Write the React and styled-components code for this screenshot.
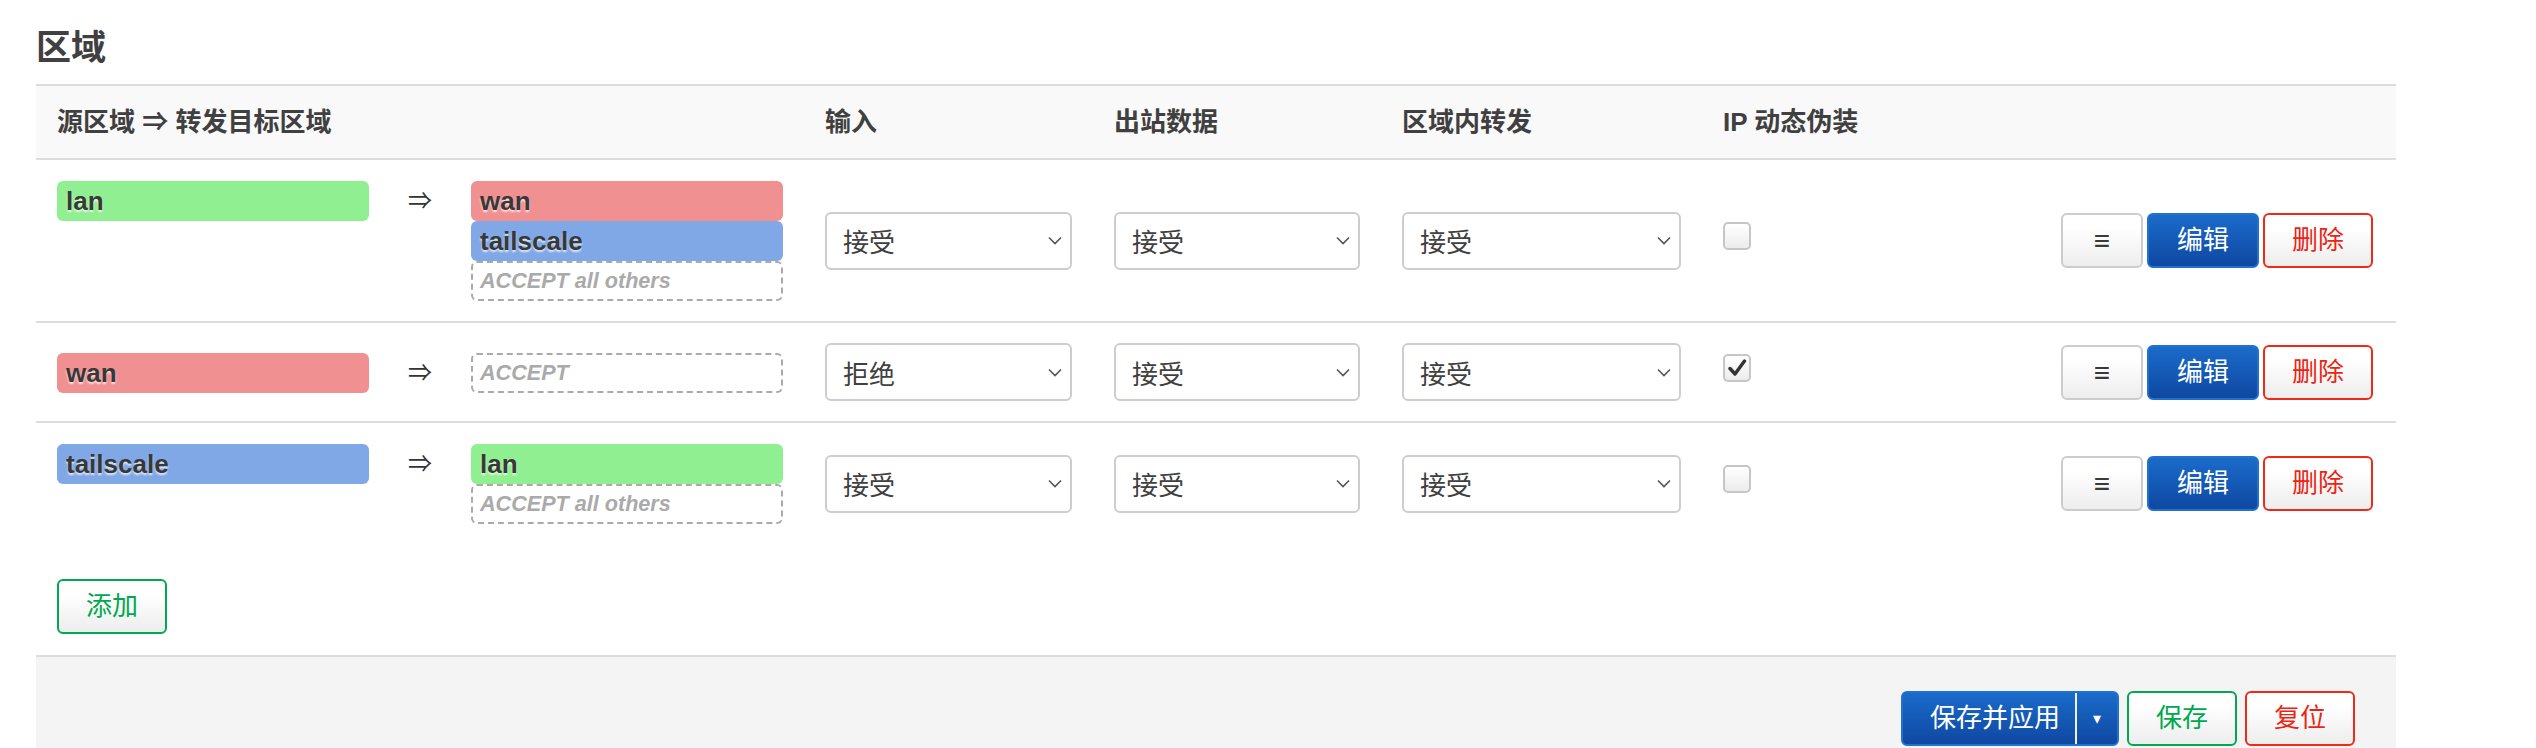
import React from 'react';
import styled, { createGlobalStyle } from 'styled-components';

const GlobalStyle = createGlobalStyle`
  body {
    margin: 0;
    background: #fff;
    color: #404040;
    font-family: "Liberation Sans", "Noto Sans CJK SC", sans-serif;
    font-size: 26px;
  }
`;

const Page = styled.div`
  width: 2360px;
  margin-left: 36px;
`;

const Title = styled.h2`
  margin: 28px 0 16px;
  font-size: 35px;
  line-height: 40px;
  font-weight: bold;
  color: #404040;
`;

/* shared column layout for header and rows */
const Grid = styled.div`
  display: grid;
  grid-template-columns: 768px 289px 288px 321px 1fr auto;
  align-items: center;
`;

const HeadRow = styled(Grid)`
  height: 72px;
  background: #f9f9f9;
  border-top: 2px solid #ddd;
  border-bottom: 2px solid #ddd;
`;

const HeadCell = styled.div`
  padding: 0 21px;
  font-weight: bold;
  line-height: 32px;
  white-space: nowrap;
`;

const Row = styled(Grid)`
  border-bottom: ${(p) => (p.$last ? 'none' : '2px solid #ddd')};
`;

const Cell = styled.div`
  padding: 20px ${(p) => (p.$right ? 23 : 21)}px 20px 21px;
  display: flex;
  align-items: center;
  justify-content: ${(p) => (p.$right ? 'flex-end' : 'flex-start')};
`;

const Forwards = styled.div`
  width: 100%;
  padding-top: 1px;
  display: grid;
  grid-template-columns: 312px 1fr 312px;
  align-items: start;
`;

const Arrow = styled.span`
  text-align: center;
  line-height: 40px;
  font-size: 24px;
  color: #333;
`;

const DestList = styled.div`
  display: flex;
  flex-direction: column;
`;

const Badge = styled.div`
  height: 40px;
  line-height: 40px;
  padding: 0 9px;
  border-radius: 6px;
  background: ${(p) => p.$color};
  font-weight: bold;
  font-size: 26px;
  color: #383838;
  text-shadow: 0 2px 2px rgba(255, 255, 255, 0.75);
  white-space: nowrap;
`;

const PolicyBadge = styled.div`
  box-sizing: border-box;
  height: 40px;
  line-height: 36px;
  padding: 0 7px;
  border: 2px dashed #aaa;
  border-radius: 6px;
  font-size: 21.6px;
  font-weight: bold;
  font-style: italic;
  color: #aaa;
  white-space: nowrap;
`;

const SelectBox = styled.div`
  box-sizing: border-box;
  width: 100%;
  height: 58px;
  padding: 0 8px 0 16px;
  border: 2px solid #cdcdcd;
  border-radius: 6px;
  background: #fff;
  display: flex;
  align-items: center;
  justify-content: space-between;
  color: #404040;
`;

const Check = styled.div`
  box-sizing: border-box;
  width: 28px;
  height: 28px;
  margin-bottom: 9px;
  border: 2px solid #c6c6c6;
  border-radius: 5px;
  background: linear-gradient(#fff, #ececec);
  display: flex;
  align-items: center;
  justify-content: center;
`;

const Actions = styled.div`
  display: flex;
  gap: 4px;
`;

const Button = styled.button`
  box-sizing: border-box;
  height: 55px;
  padding: 0 ${(p) => p.$pad || 28}px;
  border: 2px solid ${(p) => p.$border || '#ccc'};
  border-radius: 6px;
  background: linear-gradient(#fff, #fff 25%, #ededed);
  color: ${(p) => p.$color || '#404040'};
  font-family: inherit;
  font-size: 26px;
  line-height: 51px;
  white-space: nowrap;
  cursor: pointer;
`;

const MenuButton = styled(Button)`
  width: 82px;
  padding: 0;
  font-weight: bold;
  font-size: 28px;
  color: #3a3a3a;
`;

const BlueButton = styled(Button)`
  border-color: #2171d1;
  background: linear-gradient(#1b6bca, #0e48a2);
  color: #fff;
`;

const CreateBar = styled.div`
  padding: 35px 21px 21px;
`;

const Footer = styled.div`
  border-top: 2px solid #ddd;
  background: #f4f4f4;
  padding: 34px 41px 30px;
  display: flex;
  justify-content: flex-end;
  gap: 8px;
`;

const SplitButton = styled(BlueButton)`
  display: flex;
  align-items: stretch;
  padding: 0;
`;

const SplitMain = styled.span`
  padding: 0 15px 0 27px;
`;

const SplitCaret = styled.span`
  width: 40px;
  border-left: 2px solid rgba(255, 255, 255, 0.92);
  font-size: 16px;
  text-align: center;
`;

const Chevron = () => (
  <svg width="14" height="9" viewBox="0 0 14 9" fill="none">
    <path d="M1 1.5 L7 7.5 L13 1.5" stroke="#555" strokeWidth="1.6" />
  </svg>
);

const Tick = () => (
  <svg width="20" height="18" viewBox="0 0 20 18" fill="none">
    <path d="M3 9.5 L8 15 L17.5 2" stroke="#333" strokeWidth="3.4" strokeLinecap="round" strokeLinejoin="round" />
  </svg>
);

const ZONE_COLORS = {
  lan: '#90ef90',
  wan: '#f09090',
  tailscale: '#80a8e6',
};

const zones = [
  { name: 'lan', dest: ['wan', 'tailscale'], policy: 'ACCEPT all others', input: '接受', output: '接受', forward: '接受', masq: false },
  { name: 'wan', dest: [], policy: 'ACCEPT', input: '拒绝', output: '接受', forward: '接受', masq: true },
  { name: 'tailscale', dest: ['lan'], policy: 'ACCEPT all others', input: '接受', output: '接受', forward: '接受', masq: false },
];

const Select = ({ value }) => (
  <SelectBox>
    <span>{value}</span>
    <Chevron />
  </SelectBox>
);

export default function App() {
  return (
    <>
      <GlobalStyle />
      <Page>
        <Title>区域</Title>
        <HeadRow>
          <HeadCell>源区域 ⇒ 转发目标区域</HeadCell>
          <HeadCell>输入</HeadCell>
          <HeadCell>出站数据</HeadCell>
          <HeadCell>区域内转发</HeadCell>
          <HeadCell>IP 动态伪装</HeadCell>
          <HeadCell />
        </HeadRow>
        {zones.map((z, i) => (
          <Row key={z.name} $last={i === zones.length - 1}>
            <Cell>
              <Forwards>
                <Badge $color={ZONE_COLORS[z.name]}>{z.name}</Badge>
                <Arrow>⇒</Arrow>
                <DestList>
                  {z.dest.map((d) => (
                    <Badge key={d} $color={ZONE_COLORS[d]}>{d}</Badge>
                  ))}
                  <PolicyBadge>{z.policy}</PolicyBadge>
                </DestList>
              </Forwards>
            </Cell>
            <Cell><Select value={z.input} /></Cell>
            <Cell><Select value={z.output} /></Cell>
            <Cell><Select value={z.forward} /></Cell>
            <Cell>
              <Check>{z.masq && <Tick />}</Check>
            </Cell>
            <Cell $right>
              <Actions>
                <MenuButton>≡</MenuButton>
                <BlueButton>编辑</BlueButton>
                <Button $border="#f02a16" $color="#ec2412" $pad={27}>删除</Button>
              </Actions>
            </Cell>
          </Row>
        ))}
        <CreateBar>
          <Button $border="#00a84f" $color="#00a84f" $pad={27}>添加</Button>
        </CreateBar>
        <Footer>
          <SplitButton>
            <SplitMain>保存并应用</SplitMain>
            <SplitCaret>▾</SplitCaret>
          </SplitButton>
          <Button $border="#00a84f" $color="#00a84f" $pad={27}>保存</Button>
          <Button $border="#f02a16" $color="#ec2412" $pad={27}>复位</Button>
        </Footer>
      </Page>
    </>
  );
}
